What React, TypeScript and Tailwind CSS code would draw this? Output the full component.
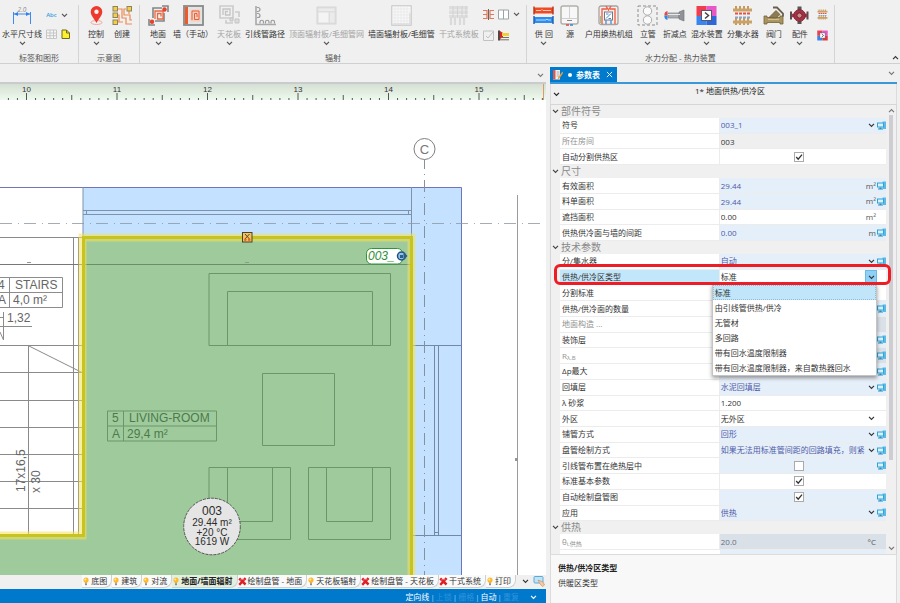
import { Fragment, useState } from "react";
import type { ReactNode } from "react";
import { clsx } from "clsx";

type Tone = "white" | "blue" | "gray" | "dim";

interface PropertyRow {
  id: string;
  label: ReactNode;
  kind: "text" | "select" | "check";
  value?: string;
  checked?: boolean;
  unit?: string;
  tone: Tone;
  linked?: boolean;
  muted?: boolean;
  active?: boolean;
}

interface PropertySection {
  title: string;
  rows: PropertyRow[];
}

const sections: PropertySection[] = [
  {
    title: "部件符号",
    rows: [
      { id: "symbol", label: "符号", kind: "select", value: "003_1", tone: "blue", linked: true },
      { id: "room", label: "所在房间", kind: "text", value: "003", tone: "gray", muted: true },
      { id: "auto-split", label: "自动分割供热区", kind: "check", checked: true, tone: "white" },
    ],
  },
  {
    title: "尺寸",
    rows: [
      { id: "area-eff", label: "有效面积", kind: "text", value: "29.44", unit: "m²", tone: "blue", linked: true },
      { id: "area-list", label: "料单面积", kind: "text", value: "29.44", unit: "m²", tone: "blue", linked: true },
      { id: "area-cover", label: "遮挡面积", kind: "text", value: "0.00", unit: "m²", tone: "white" },
      { id: "wall-gap", label: "供热供冷面与墙的间距", kind: "text", value: "0.00", unit: "m", tone: "blue", linked: true },
    ],
  },
  {
    title: "技术参数",
    rows: [
      { id: "manifold", label: "分/集水器", kind: "select", value: "自动", tone: "blue", linked: true },
      { id: "zone-type", label: "供热/供冷区类型", kind: "select", value: "标准", tone: "white", active: true },
      { id: "split-std", label: "分割标准", kind: "text", value: "", tone: "white" },
      { id: "face-count", label: "供热/供冷面的数量", kind: "text", value: "", tone: "blue", linked: true },
      { id: "floor-build", label: "地面构造 ...", kind: "text", value: "", tone: "dim", muted: true },
      { id: "finish", label: "装饰层", kind: "text", value: "", tone: "blue", linked: true },
      {
        id: "r-lambda",
        label: (
          <>
            R<sub className="text-[6px]">λ,B</sub>
          </>
        ),
        kind: "text",
        value: "",
        tone: "dim",
        linked: true,
        muted: true,
      },
      { id: "dp-max", label: "Δp最大", kind: "text", value: "", tone: "blue", linked: true },
      { id: "fill", label: "回填层", kind: "select", value: "水泥回填层", tone: "blue", linked: true },
      { id: "mortar", label: "λ 砂浆", kind: "text", value: "1.200", tone: "white" },
      { id: "outer", label: "外区", kind: "select", value: "无外区", tone: "white" },
      { id: "laying", label: "铺管方式", kind: "select", value: "回形", tone: "blue", linked: true },
      {
        id: "coil",
        label: "盘管绘制方式",
        kind: "select",
        value: "如果无法用标准管间距的回路填充，则紧凑",
        tone: "blue",
        linked: true,
      },
      { id: "lead-pipe", label: "引线管布置在绝热层中", kind: "check", checked: false, tone: "blue", linked: true },
      { id: "std-param", label: "标准基本参数", kind: "check", checked: true, tone: "white" },
      { id: "auto-draw", label: "自动绘制盘管图", kind: "check", checked: true, tone: "blue", linked: true },
      { id: "usage", label: "应用", kind: "select", value: "供热", tone: "blue", linked: true },
    ],
  },
  {
    title: "供热",
    rows: [
      {
        id: "theta",
        label: (
          <>
            θ<sub className="text-[6px]">i,供热</sub>
          </>
        ),
        kind: "text",
        value: "20.0",
        unit: "°C",
        tone: "dim",
        muted: true,
      },
    ],
  },
];

const zoneTypes = [
  "标准",
  "由引线管供热/供冷",
  "无管材",
  "多回路",
  "带有回水温度限制器",
  "带有回水温度限制器，来自散热器回水",
];

const layers = [
  { name: "底图", on: true },
  { name: "建筑", on: true },
  { name: "对流", on: true },
  { name: "地面/墙面辐射", on: true, active: true },
  { name: "绘制盘管 - 地面", on: false },
  { name: "天花板辐射", on: true },
  { name: "绘制盘管 - 天花板", on: false },
  { name: "干式系统", on: false },
  { name: "打印", on: true },
];

const toneBg: Record<Tone, string> = {
  white: "bg-white text-[#333]",
  blue: "bg-[#e5effa] text-[#4f5aa6]",
  gray: "bg-[#efefef] text-[#333]",
  dim: "bg-[#d9e0e8] text-[#666d80]",
};

/* ---------- small icons ---------- */

function Chevron({ className, up }: { className?: string; up?: boolean }) {
  return (
    <svg viewBox="0 0 8 6" className={clsx("h-[5px] w-[7px] shrink-0", className)} fill="none" stroke="currentColor" strokeWidth="1.4">
      <path d={up ? "M1 5l3-3 3 3" : "M1 1l3 3 3-3"} />
    </svg>
  );
}

function LinkedIcon() {
  return (
    <svg viewBox="0 0 9 9" className="size-[9px] shrink-0">
      <path d="M5.5 0.5h3.5v7.5h-3z" fill="#5bbce6" />
      <rect x="0.5" y="2" width="6" height="4" fill="#d8f1fc" stroke="#2fa3d8" />
      <path d="M2.5 6.5h2v1h1.5v1h-5v-1h1.5z" fill="#2b8fc2" />
    </svg>
  );
}

function BulbIcon() {
  return (
    <svg viewBox="0 0 8 9" className="h-[9px] w-2 shrink-0">
      <circle cx="4" cy="3" r="2.6" fill="#fdb92c" />
      <circle cx="3.3" cy="2.4" r="1" fill="#fff0b8" />
      <path d="M2.8 5.2h2.4l-.4 1.2h-1.6z" fill="#f39a1e" />
      <rect x="3.1" y="6.4" width="1.8" height="1.8" fill="#7b8494" />
    </svg>
  );
}

function CrossIcon() {
  return (
    <svg viewBox="0 0 9 9" className="size-[9px] shrink-0">
      <path d="M1.2 1.5l6.4 6M7.6 1.2L1.2 7.8" stroke="#dd1f26" strokeWidth="2.4" />
      <path d="M2 3.2q2.4-1.8 4.8 0" stroke="#f0696e" strokeWidth="1" fill="none" />
    </svg>
  );
}

function Icon({ children }: { children: ReactNode }) {
  return (
    <svg viewBox="0 0 21 21" className="size-[21px]" fill="none">
      {children}
    </svg>
  );
}

/* ---------- ribbon icons ---------- */

const DimensionIcon = () => (
  <Icon>
    <text x="10" y="6.5" textAnchor="middle" fontSize="6.5" fontStyle="italic" fill="#888">
      2.0
    </text>
    <path d="M1.5 7v12M18.500 7v12M2 9h16" stroke="#3d8bf2" />
    <path d="M2 9l4-2v4zM18 9l-4-2v4z" fill="#2f80ee" />
  </Icon>
);

const PinIcon = () => (
  <Icon>
    <ellipse cx="10.5" cy="17.5" rx="5.5" ry="2" stroke="#f3a59c" />
    <path d="M10.5 18C7.5 12.5 4.7 10.5 4.7 6.8a5.8 5.8 0 0 1 11.6 0c0 3.7-2.8 5.7-5.8 11.2z" fill="#ee3a2c" />
    <circle cx="10.5" cy="6.8" r="2.2" fill="#f6f0ef" />
  </Icon>
);

const SchemeIcon = () => (
  <Icon>
    <path d="M5 4h5v9h4v6h6M5 10h2v7h4M14 4h-2v6h6v5h2M5 17h6M17 6v3" stroke="#f08a52" strokeWidth="1.2" />
    {[
      [1, 1.5],
      [1, 8],
      [1, 15],
      [15, 1.5],
    ].map(([x, y]) => (
      <rect key={`${x}-${y}`} x={x} y={y} width="4.5" height="4.5" fill="#f6cf3a" stroke="#8a8466" />
    ))}
  </Icon>
);

function FloorIcon({ gray }: { gray?: boolean }) {
  const line = gray ? "#c3c3c3" : "#e8663f";
  const frame = gray ? "#cbcbcb" : "#7f8785";
  return (
    <Icon>
      <path
        d={gray ? "M1 1h13v12H1zM16 7h4v5M7 15v3h7" : "M5 13V3h9M1 14v6h6M7 16h9V8M14 1h6v6"}
        stroke={frame}
        strokeWidth="1.6"
      />
      <path d={gray ? "M4 10V4h7v6H6.500V6.500h2.500" : "M7 14V6h8v8H9.500V8.500h3.500v3"} stroke={line} strokeWidth="1.3" />
      {gray ? (
        <path d="M11 13h3v3h-3zM16 14h4v4h-4z" fill="#dcdcdc" stroke="#c3c3c3" />
      ) : (
        <>
          <circle cx="16.5" cy="4.5" r="2.2" fill="#e6402e" />
          <circle cx="4" cy="16.8" r="2.2" fill="#e6402e" />
        </>
      )}
    </Icon>
  );
}

const WallIcon = () => (
  <Icon>
    <rect x="1" y="1" width="19" height="19" fill="#e4e4e4" stroke="#868b8b" strokeWidth="1.8" />
    <rect x="2" y="2" width="3" height="17" fill="#f05a28" />
    <rect x="7.500" y="4.500" width="10" height="12" fill="#f7cdbb" />
    <path d="M9 15V6h7v8.500h-4.500V8.500h2.500v3.500" stroke="#e0603c" />
  </Icon>
);

const LeadPipeIcon = () => (
  <Icon>
    <path d="M1 1v18.500h20" stroke="#a9a9a9" strokeWidth="1.6" />
    <path
      d="M2 2.500h1a1.500 1.500 0 0 1 0 4H2M2 8.500h1a1.500 1.500 0 0 1 0 4H2M5 18.500v-1.500a1.500 1.500 0 0 1 3.500 0v1.500M10.500 18.500v-1.500a1.500 1.500 0 0 1 3.500 0v1.500M16 18.500v-1.500a1.500 1.500 0 0 1 3.500 0v1.500"
      stroke="#9a9a9a"
      strokeWidth="1.2"
    />
  </Icon>
);

const CeilingPanelIcon = () => (
  <Icon>
    <rect x="1" y="2" width="19" height="17" fill="#dedede" stroke="#d6d6d6" />
    <path d="M2.500 7.500h10v10h-10z" fill="#f4f4f4" />
    <path d="M14 7.500h4.500v10H14zM2.500 3.500h16V6h-16z" fill="#ebebeb" />
  </Icon>
);

const WallPanelIcon = () => (
  <Icon>
    <rect x="0.8" y="0.8" width="19.4" height="19.4" fill="#f8f8f8" stroke="#c4c4c4" />
    <path d="M4 2v17M7 2v17M10 2v17M13 2v17M16 2v17M2 4h17M2 7h17M2 10h17M2 13h17M2 16h17" stroke="#e6e6e6" strokeWidth="0.7" />
    <path d="M2 19h17V8" stroke="#dcdcdc" strokeWidth="1.5" />
  </Icon>
);

const DryPanelIcon = () => (
  <Icon>
    <path d="M1 1h19v3.500H1zM1 5.500h19V9H1zM1 10h19v2.500H1z" fill="#dedede" />
    <path d="M3 12v8M7 12v8M12 12v8M16 12v8" stroke="#dadada" strokeWidth="2.2" />
    <path d="M5 1v12M9.500 1v12M14 1v12M18 1v12" stroke="#d2d2d2" />
  </Icon>
);

const SupplyReturnIcon = () => (
  <Icon>
    <path d="M1 2.500h19v6H1z" fill="#ee4a24" />
    <path d="M1 12h19v6H1z" fill="#2c8cf0" />
    <path d="M1 1.500v8M20 1.500v8" stroke="#b6341a" strokeWidth="1.4" />
    <path d="M1 11v8M20 11v8" stroke="#1d5fb0" strokeWidth="1.4" />
    <path d="M3 5.500h5l1-1 1 1h8" stroke="#ffc9b8" />
    <path d="M3 15h10l1-1 1 1h3" stroke="#b9dcff" />
  </Icon>
);

const BoilerIcon = () => (
  <Icon>
    <rect x="2" y="1" width="17" height="18" rx="2" fill="#f7f7f7" stroke="#b1b1ab" strokeWidth="1.5" />
    <path d="M10.500 2v11M3 13.500h15" stroke="#d0d0d0" />
    <path d="M8 15.500h5" stroke="#888" />
    <path d="M7 20h3" stroke="#d44" strokeWidth="1.5" />
    <path d="M11 20h3" stroke="#38c" strokeWidth="1.5" />
  </Icon>
);

const StationIcon = () => (
  <Icon>
    <rect x="1" y="1" width="19" height="18.5" rx="2" fill="#f6eeeb" stroke="#a8a29f" strokeWidth="1.3" />
    <path d="M4 19V4h5M12 4h5v15M8 1l2.500 4L13 1" stroke="#ee5a45" strokeWidth="1.3" />
    <rect x="6.500" y="7" width="8" height="8" fill="#fff" stroke="#777" />
    <path d="M8 13.500l5-5M8 9h2.500M10.500 13.500H13" stroke="#3a8be0" />
    <path d="M8 15v4M13 15v4" stroke="#4b8fd8" strokeWidth="1.3" />
    <path d="M2.500 11v7" stroke="#7fcf8c" />
  </Icon>
);

const RiserIcon = () => (
  <Icon>
    <rect x="1" y="1" width="19" height="19" stroke="#8d8d8d" strokeDasharray="3 2" />
    <circle cx="10.500" cy="6" r="4.200" fill="#fafafa" stroke="#ababab" />
    <circle cx="10.500" cy="15" r="4.200" fill="#fafafa" stroke="#ababab" />
  </Icon>
);

const ReducerIcon = () => (
  <Icon>
    <path d="M4 8h11v5H4z" fill="#a9adb2" stroke="#7e8286" strokeWidth="0.7" />
    <path d="M15 7l5-2v11l-5-2z" fill="#8f9398" stroke="#74787c" strokeWidth="0.7" />
    <path d="M4 9.500h12" stroke="#e6e8ea" />
    <path d="M3.500 6v4.500H0.500A4 4 0 0 1 3.500 6z" fill="#ea4a3c" />
    <path d="M0.500 10.500h3V15a4 4 0 0 1-3-4.500z" fill="#2f86e4" />
  </Icon>
);

function MixIcon({ small }: { small?: boolean }) {
  return (
    <svg viewBox="0 0 21 21" className={small ? "size-[11px]" : "size-[21px]"} fill="none">
      <path d="M0.500 1h10v10h-10z" fill="#f03c4c" />
      <path d="M10.500 1h10v10h-10z" fill="#e857c8" />
      <path d="M0.500 11h10v9h-10z" fill="#3a86f0" />
      <path d="M10.500 11h10v9h-10z" fill={small ? "#e03838" : "#2f66d8"} />
      <rect x="5.500" y="5.500" width="10" height="10" fill="#fff" stroke="#55596b" />
      <path d="M9 7.500l3.500 3L9 13.500" stroke="#444" strokeWidth="1.5" />
    </svg>
  );
}

function ManifoldIcon({ small }: { small?: boolean }) {
  return (
    <svg viewBox="0 0 21 21" className={small ? "size-[11px]" : "size-[21px]"} fill="none">
      <path d="M4 1v5M8 1v5M12 1v5M16 1v5M4 13v7M8 13v7M12 13v7M16 13v7" stroke="#c79a5c" strokeWidth="2" />
      <path d="M1 5h19M1 17h19" stroke="#c9a267" strokeWidth="3" />
      <path d="M3 8.500h3M7 8.500h3M11 8.500h3M15 8.500h3" stroke="#e05446" strokeWidth="2" />
      <path d="M3 12.500h3M7 12.500h3M11 12.500h3M15 12.500h3" stroke="#8aa4c4" strokeWidth="2" />
    </svg>
  );
}

const ValveIcon = () => (
  <Icon>
    <path d="M1 11h3v1.500h13V11h3v8h-3v-1.500H4V19H1z" fill="#a99460" stroke="#75613a" strokeWidth="0.8" />
    <path d="M6 12.500l7-7 4 4-4 3.500z" fill="#8d7b52" stroke="#6b5a37" strokeWidth="0.8" />
    <path d="M10 2.500h4l6 6v3" stroke="#6a5f48" strokeWidth="1.8" />
    <path d="M5 14.500h11" stroke="#d0bf92" strokeWidth="1.2" />
  </Icon>
);

const PumpIcon = () => (
  <Icon>
    <path d="M2 6.500v8M18.500 6.500v8" stroke="#5d4a4e" strokeWidth="2" />
    <path d="M3 10.500h15" stroke="#a23a48" strokeWidth="3.5" />
    <path d="M8.500 1.500h4v4h-4zM8.500 16h4v3h-4z" fill="#555" />
    <circle cx="10.500" cy="10.500" r="5.800" fill="#a9303f" stroke="#7c2632" />
    <circle cx="10.500" cy="10.500" r="2.600" fill="#c98d95" stroke="#6e2430" />
  </Icon>
);

const SmallTableIcon = () => (
  <svg viewBox="0 0 11 10" className="h-[10px] w-[11px]" fill="#f6f6f6" stroke="#c6c6c6">
    <path d="M.5 1h10v8.500H.5zM.5 4h10M.5 6.700h10M4 1v8.500M7.500 1v8.500" />
  </svg>
);

const NoteIcon = () => (
  <svg viewBox="0 0 9 10" className="h-[10px] w-[9px]">
    <path d="M1 1h4.500L8.500 4v5.500H1z" fill="#fdf02e" stroke="#6f6a20" />
    <path d="M5.500 1v3h3" fill="none" stroke="#6f6a20" />
  </svg>
);

/* ---------- ribbon ---------- */

interface ToolProps {
  label: string;
  icon: ReactNode;
  menu?: boolean;
  disabled?: boolean;
}

function Tool({ label, icon, menu, disabled }: ToolProps) {
  return (
    <button
      type="button"
      disabled={disabled}
      className={clsx(
        "flex min-w-[22px] flex-col items-center whitespace-nowrap",
        disabled ? "text-[#a3a3a3]" : "text-[#333]",
      )}
    >
      {icon}
      <span className="leading-[15px]">{label}</span>
      {menu && <Chevron className="text-[#555]" />}
    </button>
  );
}

function Group({ title, className, children }: { title: string; className?: string; children: ReactNode }) {
  return (
    <section className="flex shrink-0 flex-col border-r border-[#d4d4d4]">
      <div className={clsx("flex flex-1 items-start gap-1", className)}>{children}</div>
      <h2 className="px-1 text-center leading-[10px] text-[#555]">{title}</h2>
    </section>
  );
}

function Ribbon() {
  return (
    <header className="flex h-16 shrink-0 overflow-hidden border-b border-[#d0d0d0] pt-[5px]">
      <Group title="标签和图形" className="pr-1.5 pl-0.5">
        <Tool label="水平尺寸线" icon={<DimensionIcon />} menu />
        <div className="grid grid-cols-2 items-center gap-x-1 gap-y-2 pt-1">
          <button type="button" className="text-[6px] leading-3 font-semibold text-[#3aa0dd]">
            Abc
          </button>
          <Chevron className="text-[#555]" />
          <SmallTableIcon />
          <NoteIcon />
        </div>
      </Group>
      <Group title="示意图" className="px-1.5">
        <Tool label="控制" icon={<PinIcon />} menu />
        <Tool label="创建" icon={<SchemeIcon />} />
      </Group>
      <Group title="辐射" className="pr-1.5 pl-[7px]">
        <Tool label="地面" icon={<FloorIcon />} menu />
        <Tool label="墙（手动）" icon={<WallIcon />} />
        <Tool label="天花板" icon={<FloorIcon gray />} menu disabled />
        <Tool label="引线管路径" icon={<LeadPipeIcon />} />
        <Tool label="顶面辐射板/毛细管网" icon={<CeilingPanelIcon />} menu disabled />
        <Tool label="墙面辐射板/毛细管" icon={<WallPanelIcon />} />
        <Tool label="干式系统板" icon={<DryPanelIcon />} disabled />
        <div className="grid grid-cols-[11px_11px_7px] items-center gap-x-1 gap-y-2.5 pt-1">
          <svg viewBox="0 0 11 11" className="size-[11px]" fill="none">
            <path d="M5.500 0v11" stroke="#666" />
            <path d="M0 1.500h4v8H0M0 5.500h4M11 1.500H7v8h4M7 5.500h4" stroke="#e0795c" strokeWidth="1.2" />
          </svg>
          <svg viewBox="0 0 11 11" className="size-[11px]" fill="#fff" stroke="#9aa4a4">
            <path d="M.5 1h10v9H.5zM5.500 1v9" />
          </svg>
          <Chevron className="text-[#555]" />
          <svg viewBox="0 0 11 11" className="size-[11px]" fill="none" stroke="#c2c2c2">
            <path d="M.5 1h10v9.500H.5zM3 6l2 2 5-6" />
          </svg>
          <svg viewBox="0 0 11 11" className="size-[11px]">
            <path d="M0 .5h2v10H0z" fill="#57453f" />
            <path d="M2 1l3 2v4L2 9z" fill="#e02020" />
            <path d="M4 3h7v3H4z" fill="#f0cf3c" />
            <path d="M3 7.500h8M2 9.800h9" stroke="#77705a" />
          </svg>
        </div>
      </Group>
      <Group title="水力分配 - 热力装置" className="pr-1.5 pl-1.5">
        <Tool label="供 回" icon={<SupplyReturnIcon />} menu />
        <Tool label="源" icon={<BoilerIcon />} />
        <Tool label="户用换热机组" icon={<StationIcon />} />
        <Tool label="立管" icon={<RiserIcon />} menu />
        <Tool label="折减点" icon={<ReducerIcon />} />
        <Tool label="混水装置" icon={<MixIcon />} menu />
        <Tool label="分集水器" icon={<ManifoldIcon />} menu />
        <Tool label="阀门" icon={<ValveIcon />} menu />
        <Tool label="配件" icon={<PumpIcon />} menu />
        <div className="flex flex-col gap-2.5 pt-1 pl-0.5">
          <ManifoldIcon small />
          <MixIcon small />
        </div>
      </Group>
      <button type="button" aria-label="折叠功能区" className="ml-auto flex items-end pr-px pb-[3px] text-[#333]">
        <Chevron up />
      </button>
    </header>
  );
}

/* ---------- drawing ---------- */

const UNIT = 90.5;
const ticks = Array.from({ length: 60 }, (_, i) => i - 2);

function Ruler() {
  return (
    <svg
      viewBox="0 0 546 16"
      preserveAspectRatio="xMinYMin slice"
      className="h-4 w-full shrink-0 bg-linear-to-b from-[#d5dfd4] to-[#effaee] font-['Liberation_Sans',sans-serif]"
    >
      {ticks.map((i) => {
        const x = 26.5 + (i * UNIT) / 10;
        const len = i % 10 === 0 ? 7 : i % 5 === 0 ? 5 : 2;
        return <path key={i} d={`M${x} ${16 - len}v${len}`} stroke="#555" strokeWidth="1" />;
      })}
      {[10, 11, 12, 13, 14, 15].map((n, i) => (
        <text key={n} x={26.5 + i * UNIT} y="8" textAnchor="middle" fontSize="8" fill="#333">
          {n}
        </text>
      ))}
      <path d="M543.500 0v16" stroke="#e09a6a" />
    </svg>
  );
}

function FloorPlan() {
  return (
    <svg
      viewBox="0 100 546 475"
      preserveAspectRatio="xMinYMin slice"
      className="min-h-0 w-full flex-1 bg-white font-['Liberation_Sans',sans-serif]"
      fill="none"
    >
      {/* outer walls */}
      <path d="M83 187h378.500v388H83z" fill="#c4e2ff" />
      <path d="M0 187.500h461.500V575" stroke="#6f76b8" />
      <path d="M83 187v50M411.500 187v50M83 210.500h328M83 214.500h328M86.500 210v4.500M408.500 210v4.500" stroke="#7d93aa" />
      <path d="M411.500 345.500h50M411.500 535.500h50M434.500 345.500v190M438.500 345.500v190M434.500 532.500h4" stroke="#7189a6" />

      {/* heated zone */}
      <path d="M83 237h328.500v338H0v-39h83z" fill="#9fca9b" />

      {/* stairs */}
      <path
        d="M0 237.500h82M73.500 237v298M78.500 237v298M0 345.500h82M0 372.500h82M0 400.500h82M0 427.500h82M0 454.500h82M0 481.500h82M0 508.500h82M28.500 345.500v190M29 346l53 26.500"
        stroke="#8a8a8a"
      />
      <path d="M0 264.500h82" stroke="#777" />
      <path d="M82 264.500h329" stroke="#6a8f68" />
      <path d="M0 277.500h62.500v30H0M0 292.500h62.500M9.500 277.500v30M0 326.500h32M3.500 312v28L0 332M0 317.500h3" stroke="#8c8c8c" />
      <g fontSize="12" fill="#666">
        <text x="-2" y="289">4</text>
        <text x="15" y="289">STAIRS</text>
        <text x="-2" y="304">A</text>
        <text x="13" y="304">4,0 m²</text>
        <text x="7" y="322">1,32</text>
        <text transform="translate(25 492) rotate(-90)">17x16,5</text>
        <text transform="translate(40 493) rotate(-90)">x 30</text>
      </g>

      {/* furniture */}
      <path
        d="M209 273.500h181.500v72H209zM227.500 345.500v-54h145v54M262.500 373.500h72v72h-72zM209 467.500h81.500v72H209zM227.500 467.500v54h45v-54M308.500 467.500h82v72h-82zM326.500 467.500v54h46v-54"
        stroke="#6b966a"
      />
      <path d="M107.500 411h109v30h-109zM107.500 426h109M123.500 411v30" stroke="#6b966a" />
      <g fontSize="12" fill="#4c7a4d">
        <text x="112" y="422">5</text>
        <text x="129" y="422">LIVING-ROOM</text>
        <text x="112" y="437.5">A</text>
        <text x="127" y="437.5">29,4 m²</text>
      </g>

      {/* selection outline */}
      <path d="M0 535.500h82.500v-298h329V575" stroke="#f2e25a" strokeOpacity="0.55" strokeWidth="8" />
      <path d="M0 535.500h83.500v-298h328V575" stroke="#c9c41d" strokeWidth="3" />

      {/* axes */}
      <path d="M0 223.500h546" stroke="#8c98a4" strokeOpacity="0.8" strokeDasharray="12 6 1 5" />
      <path d="M424.500 157v418" stroke="#84919f" strokeDasharray="12 5 1 5" />
      <circle cx="424.5" cy="149" r="10.5" fill="#fff" stroke="#808080" />
      <text x="424.5" y="153.5" textAnchor="middle" fontSize="13" fill="#777">
        C
      </text>
      <path d="M517.500 195v380" stroke="#9b9b9b" />
      <path d="M515 458h3v3h-3zM27 262h4v1h-4zM245 262h4v1h-4z" fill="#8f9a8f" />

      {/* sensor on the top edge */}
      <rect x="242.5" y="232.5" width="9.5" height="9.5" fill="#f5c35a" stroke="#4a4030" />
      <path d="M245 234l4.500 5M249.500 234l-4.500 5" stroke="#5a4630" />
      <circle cx="245.3" cy="239.8" r="1.3" fill="#e46a1b" />
      <circle cx="249.2" cy="239.8" r="1.3" fill="#e46a1b" />

      {/* zone tag */}
      <rect x="366.5" y="248.5" width="36" height="15.5" rx="5" fill="#fff" stroke="#2f9638" />
      <text x="368" y="260" fontSize="12" fontStyle="italic" fill="#2f8f38">
        003_
      </text>
      <circle cx="401.5" cy="256" r="4" fill="#8fc3e8" stroke="#23507a" strokeWidth="1.5" />
      <path d="M403.500 252v8l4-4zM400 255h3v3h-3z" fill="#2d5f8b" />

      {/* room summary */}
      <circle cx="212" cy="526.5" r="28.3" fill="#e5e5e5" stroke="#555" strokeDasharray="3 1" />
      <g textAnchor="middle" fill="#2c2c2c" fontSize="10">
        <text x="212" y="515" fontSize="12">
          003
        </text>
        <text x="212" y="526">29.44 m²</text>
        <text x="212" y="535.5">+20 °C</text>
        <text x="212" y="545">1619 W</text>
      </g>
    </svg>
  );
}

function Workspace() {
  return (
    <main className="flex min-w-0 flex-1 flex-col pr-[3px]">
      <div className="flex h-5 shrink-0 items-center justify-end border-b-2 border-[#c9cccc] px-0.5 pt-1 text-[#777]">
        <Chevron />
      </div>
      <Ruler />
      <FloorPlan />
      <nav className="flex h-3.5 shrink-0 items-stretch justify-end overflow-hidden pb-px">
        {layers.map((layer) => (
          <button
            key={layer.name}
            type="button"
            className={clsx(
              "flex items-center gap-px rounded-br-lg border-r border-b border-[#cfcfcf] pr-1 whitespace-nowrap",
              layer.active ? "bg-[#e3f0e0] font-bold text-[#222]" : "bg-[#fafafa] text-[#333]",
            )}
          >
            {layer.on ? <BulbIcon /> : <CrossIcon />}
            {layer.name}
          </button>
        ))}
        <button type="button" aria-label="更多图层" className="flex items-center pr-1 pl-1.5 text-[#333]">
          <Chevron />
        </button>
        <svg viewBox="0 0 12 12" className="mr-px size-3 shrink-0">
          <rect x="1" y="1.5" width="9" height="6.5" rx="1" fill="#bfe4f8" stroke="#5aa9d6" />
          <path d="M5 5l5 2 1.500 3-2 1.500L7 9z" fill="#f3c9a4" stroke="#c58a5c" strokeWidth="0.6" />
        </svg>
      </nav>
      <footer className="flex h-3.5 shrink-0 items-center justify-end gap-px bg-[#0078cc] pt-0.5 pr-[9px] text-[#2f93da]">
        <span className="text-white">定向线</span>
        <span className="text-[#9fd0f2]">|</span>
        <span>上锁</span>
        <span className="text-[#9fd0f2]">|</span>
        <span>栅格</span>
        <span className="text-[#9fd0f2]">|</span>
        <span className="text-white">自动</span>
        <span className="text-[#9fd0f2]">|</span>
        <span>重复</span>
        <Chevron className="ml-2.5 text-white" />
      </footer>
    </main>
  );
}

/* ---------- property panel ---------- */

function ZoneTypeList({ selected, onSelect }: { selected: string; onSelect: (v: string) => void }) {
  return (
    <ul
      role="listbox"
      aria-label="供热/供冷区类型"
      className="absolute top-full right-[9px] -left-2 z-20 border border-[#c4c4c4] bg-white text-[#333] shadow-[0_2px_4px_rgba(0,0,0,0.4)]"
    >
      {zoneTypes.map((type) => (
        <li
          key={type}
          role="option"
          aria-selected={type === selected}
          onClick={() => onSelect(type)}
          className={clsx(
            "h-[15px] px-0.5 leading-[15px] whitespace-nowrap",
            type === selected && "bg-[#c1e6f9] outline-1 -outline-offset-1 outline-[#8fbcd6] outline-dotted",
          )}
        >
          {type}
        </li>
      ))}
    </ul>
  );
}

function Property({ row }: { row: PropertyRow }) {
  const [value, setValue] = useState(row.value ?? "");
  const [checked, setChecked] = useState(row.checked ?? false);
  const options = row.active ? zoneTypes : [value];

  return (
    <div className="relative flex min-h-0 flex-1 pl-[9px]">
      <label
        htmlFor={row.id}
        className={clsx(
          "flex w-[49%] shrink-0 items-center border-r border-b border-[#ececec] pl-0.5 whitespace-nowrap",
          row.active ? "bg-[#c3e7fa]" : "bg-white",
          row.muted ? "text-[#929292]" : "text-[#333]",
        )}
      >
        <span>{row.label}</span>
      </label>
      <div className={clsx("relative flex min-w-0 flex-1 items-center border-b border-[#ececec] pl-px", toneBg[row.tone])}>
        {row.kind === "text" && (
          <input
            id={row.id}
            value={value}
            onChange={(e) => setValue(e.target.value)}
            className="h-full min-w-0 flex-1 bg-transparent outline-none"
          />
        )}
        {row.kind === "select" && (
          <>
            <select
              id={row.id}
              value={value}
              onChange={(e) => setValue(e.target.value)}
              className="h-full min-w-0 flex-1 appearance-none overflow-hidden bg-transparent outline-none"
            >
              {options.map((o) => (
                <option key={o}>{o}</option>
              ))}
            </select>
            <span
              className={clsx(
                "pointer-events-none flex w-3 items-center justify-center self-stretch text-[#333]",
                row.active && "border border-[#6db9e6] bg-[#8fd0f7]",
              )}
            >
              <Chevron />
            </span>
          </>
        )}
        {row.kind === "check" && (
          <span className="grid flex-1 place-items-center">
            <input
              id={row.id}
              type="checkbox"
              checked={checked}
              onChange={(e) => setChecked(e.target.checked)}
              className="col-start-1 row-start-1 size-2.5 appearance-none border border-[#aaa] bg-white"
            />
            {checked && (
              <svg viewBox="0 0 10 10" className="pointer-events-none col-start-1 row-start-1 size-2.5" fill="none">
                <path d="M2.2 5l2 2.2L8 2.6" stroke="#333" strokeWidth="1.3" />
              </svg>
            )}
          </span>
        )}
        {row.unit && <span className="pr-px text-[#555]">{row.unit}</span>}
        <span className="flex w-[9px] shrink-0 items-center">{row.linked && <LinkedIcon />}</span>
        {row.active && <ZoneTypeList selected={value} onSelect={setValue} />}
      </div>
      {row.active && (
        <span className="pointer-events-none absolute -top-1.5 -right-[5px] bottom-0 left-[3px] z-30 rounded-md border-[3px] border-[#ee1c24]" />
      )}
    </div>
  );
}

function PropertyPanel() {
  return (
    <aside className="flex w-[39%] shrink-0 flex-col pr-[3px] pl-px">
      <div className="flex h-5 shrink-0 items-end justify-between border-b-2 border-[#3a98d8]">
        <div className="flex h-[15px] items-center gap-1 bg-[#007acc] pr-1 pl-[3px] font-semibold text-white">
          <svg viewBox="0 0 10 11" className="h-[11px] w-2.5">
            <path d="M0 1h7v9.500H0z" fill="#f4f4f4" />
            <path d="M0 1h2.500v9.500H0z" fill="#d65a50" />
            <path d="M3.500 3h3M3.500 5h3M3.500 7h3" stroke="#999" strokeWidth="0.8" />
            <path d="M9.500 2.500L5 8.500l-.5 2 2-1L10 4z" fill="#f0a03c" />
          </svg>
          <span className="ml-px size-1 rounded-full bg-white" />
          <span>参数表</span>
          <button type="button" aria-label="关闭" className="pl-0.5">
            <svg viewBox="0 0 8 8" className="size-[7px]" stroke="#fff">
              <path d="M1 1l6 6M7 1L1 7" />
            </svg>
          </button>
        </div>
        <Chevron className="mr-0.5 mb-1.5 text-[#777]" />
      </div>

      <div className="flex h-5 shrink-0 items-center border-x border-[#dcdcdc] px-0.5 text-[#222]">
        <Chevron />
        <h1 className="flex-1 pb-1.5 pl-1.5 text-center">1* 地面供热/供冷区</h1>
      </div>

      <div className="flex min-h-0 flex-1 border border-b-0 border-[#d6d6d6]">
        <div className="flex min-w-0 flex-1 flex-col">
          {sections.map((section) => (
            <Fragment key={section.title}>
              <h2 className="flex h-[13px] shrink-0 items-center gap-0.5 pl-px text-[10px] leading-[13px] text-[#8a8a8a]">
                <Chevron className="text-[#444]" />
                {section.title}
              </h2>
              {section.rows.map((row) => (
                <Property key={row.id} row={row} />
              ))}
            </Fragment>
          ))}
          <div className="flex h-1 shrink-0 pl-[9px]">
            <div className="w-[49%] bg-white" />
            <div className="flex-1 bg-[#e5effa]" />
          </div>
        </div>
        <div className="flex w-2.5 shrink-0 flex-col items-center py-[3px] text-[#777]">
          <Chevron up />
          <div className="flex w-full flex-1 justify-center pt-0.5">
            <div className="h-4/5 w-1 bg-[#cdcdd2]" />
          </div>
          <Chevron />
        </div>
      </div>

      <div className="h-[49px] shrink-0 border border-b-0 border-[#dcdcdc] bg-[#f8f8f8] px-[7px] pt-[5px] text-[#333]">
        <p className="leading-[15px] font-bold text-[#222]">供热/供冷区类型</p>
        <p className="leading-[15px]">供暖区类型</p>
      </div>
    </aside>
  );
}

export default function App() {
  return (
    <div className="flex h-screen flex-col overflow-hidden bg-[#f0f0f0] font-['Open_Sans','Noto_Sans_CJK_SC',sans-serif] text-[8px] leading-[10px]">
      <Ribbon />
      <div className="flex min-h-0 flex-1">
        <Workspace />
        <PropertyPanel />
      </div>
    </div>
  );
}
